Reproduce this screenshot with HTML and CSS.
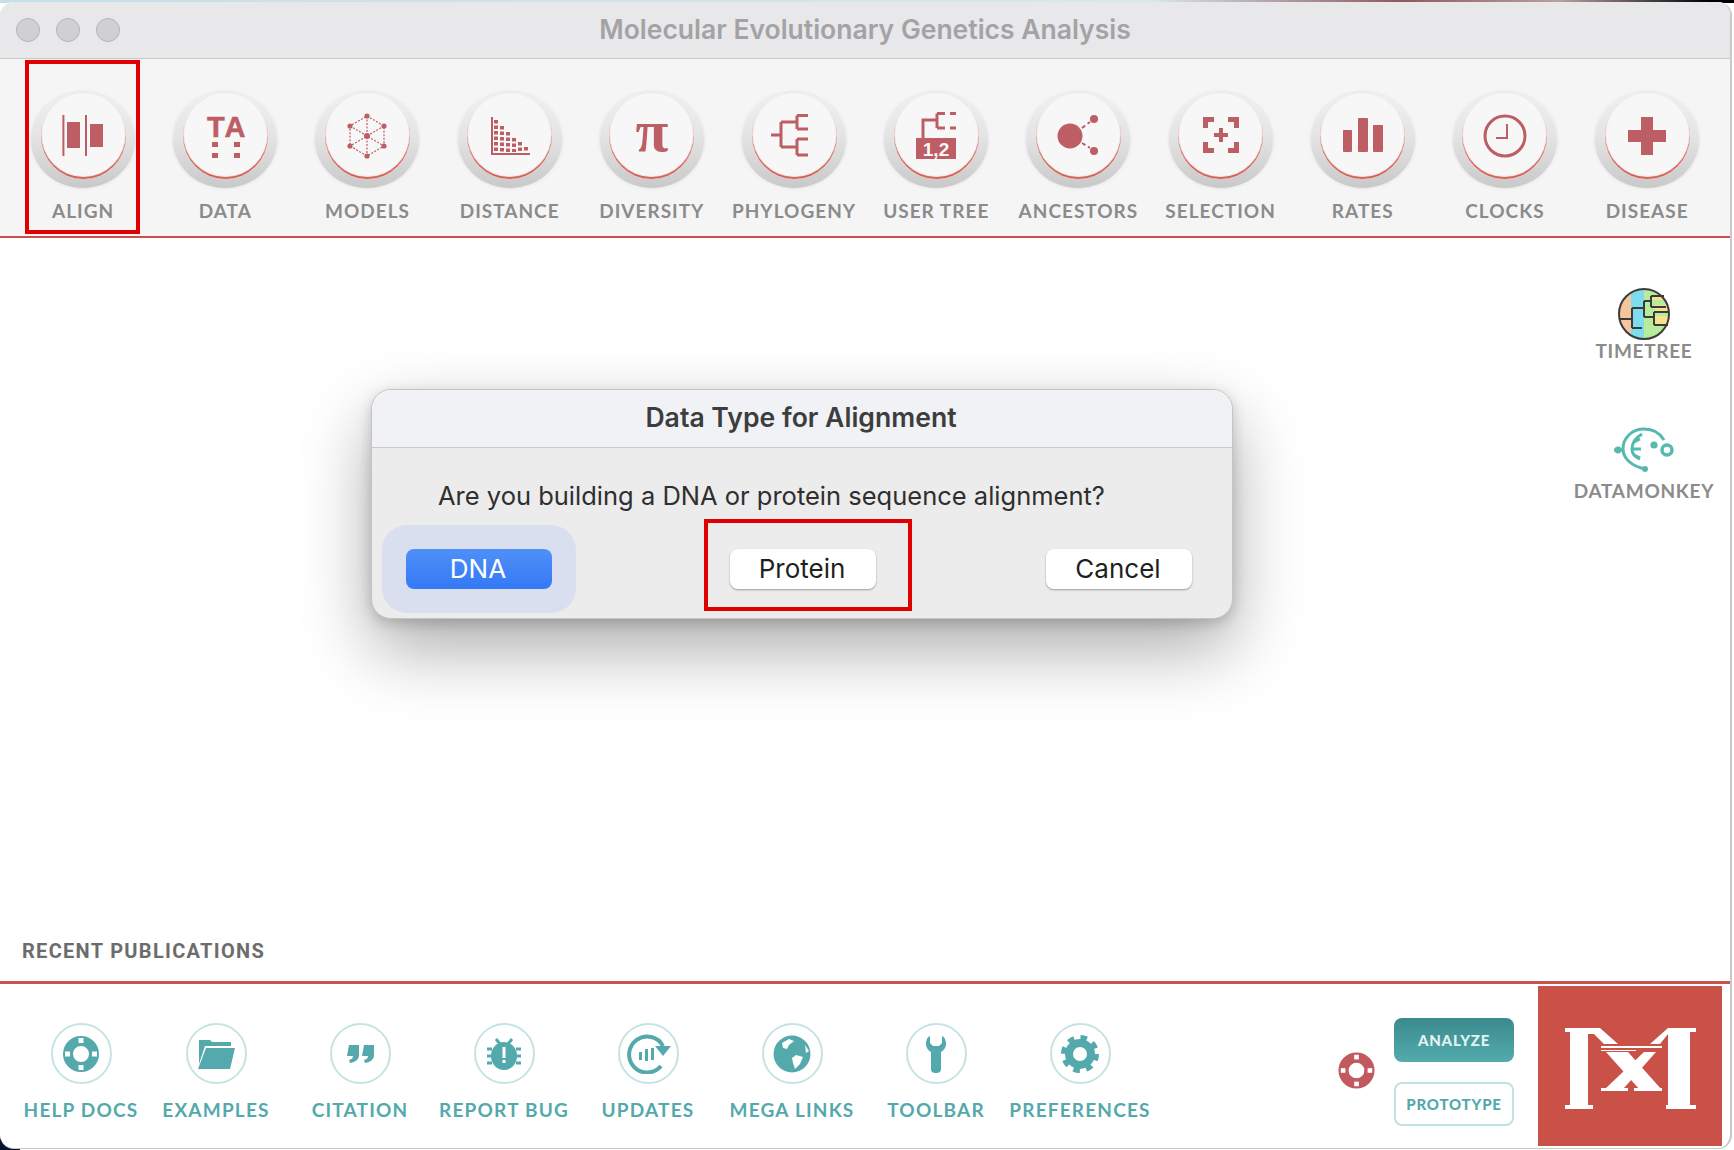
FILE: index.html
```html
<!DOCTYPE html>
<html lang="en">
<head>
  <meta charset="UTF-8">
  <title>Molecular Evolutionary Genetics Analysis</title>
  <link rel="stylesheet" href="styles.css">
</head>
<body>
  <div class="window">
    <div class="titlebar">
      <div class="lights"><span></span><span></span><span></span></div>
      <div class="title">Molecular Evolutionary Genetics Analysis</div>
    </div>

    <div class="toolbar">
      <div class="tool">
        <div class="disc"><div class="disc-in">
          <svg class="ico" width="48" height="48" viewBox="0 0 48 48"><rect x="3.4" y="3" width="2" height="41"/><rect x="8" y="10" width="13" height="26"/><rect x="26" y="3" width="2" height="41"/><rect x="31" y="12" width="13" height="23"/></svg>
        </div></div>
        <div class="tool-label">ALIGN</div>
      </div>
      <div class="tool">
        <div class="disc"><div class="disc-in">
          <svg class="ico" width="48" height="48" viewBox="0 0 48 48"><text x="6" y="25" class="ta">TA</text><rect x="11" y="30" width="6" height="5"/><rect x="11" y="41" width="6" height="5"/><rect x="33" y="30" width="6" height="5"/><rect x="33" y="41" width="6" height="5"/></svg>
        </div></div>
        <div class="tool-label">DATA</div>
      </div>
      <div class="tool">
        <div class="disc"><div class="disc-in">
          <svg class="ico" width="48" height="48" viewBox="0 0 48 48"><path class="dash" d="M24 4L41 14V34L24 44L7 34V14ZM24 4V44M7 14L41 34M41 14L7 34"/><circle cx="24" cy="4" r="2.6"/><circle cx="41" cy="14" r="2.6"/><circle cx="41" cy="34" r="2.6"/><circle cx="24" cy="44" r="2.6"/><circle cx="7" cy="34" r="2.6"/><circle cx="7" cy="14" r="2.6"/><circle cx="24" cy="24" r="3"/></svg>
        </div></div>
        <div class="tool-label">MODELS</div>
      </div>
      <div class="tool">
        <div class="disc"><div class="disc-in">
          <svg class="ico" width="48" height="48" viewBox="0 0 48 48"><path class="line2" d="M6 5V42H44"/><path class="dots" d="M10 8V40M16 14V40M22 20V40M28 26V40M34 30V40M40 35V40"/></svg>
        </div></div>
        <div class="tool-label">DISTANCE</div>
      </div>
      <div class="tool">
        <div class="disc"><div class="disc-in">
          <svg class="ico" width="72" height="72" viewBox="0 0 72 72"><text x="36" y="51" class="pi">π</text></svg>
        </div></div>
        <div class="tool-label">DIVERSITY</div>
      </div>
      <div class="tool">
        <div class="disc"><div class="disc-in">
          <svg class="ico" width="48" height="48" viewBox="0 0 48 48"><path class="line3" d="M1 23H11M11 10V35M11 10H27M11 35H27M27 3.5V17M27 3.5H38M27 17H38M27 27V43M27 27H38M27 43H38"/></svg>
        </div></div>
        <div class="tool-label">PHYLOGENY</div>
      </div>
      <div class="tool">
        <div class="disc"><div class="disc-in">
          <svg class="ico" width="48" height="48" viewBox="0 0 48 48"><rect x="4" y="26" width="40" height="21"/><path class="line3" d="M11 26V8H25M25 1.5V16M25 1.5H33M25 16H33M38 1.5H44M38 16H44"/><text x="24" y="43.500" class="num">1,2</text></svg>
        </div></div>
        <div class="tool-label">USER TREE</div>
      </div>
      <div class="tool">
        <div class="disc"><div class="disc-in">
          <svg class="ico" width="48" height="48" viewBox="0 0 48 48"><circle cx="16" cy="24" r="12.5"/><circle cx="40" cy="7" r="4"/><circle cx="40" cy="39" r="4"/><path class="dash2" d="M28 16L36 10M28 31L36 36"/></svg>
        </div></div>
        <div class="tool-label">ANCESTORS</div>
      </div>
      <div class="tool">
        <div class="disc"><div class="disc-in">
          <svg class="ico" width="48" height="48" viewBox="0 0 48 48"><path class="line5" d="M8.500 16V7.500H17M31 7.500H39.500V16M8.500 30V38.500H17M31 38.500H39.500V30"/><path class="line4" d="M24 16V30M17 23H31"/></svg>
        </div></div>
        <div class="tool-label">SELECTION</div>
      </div>
      <div class="tool">
        <div class="disc"><div class="disc-in">
          <svg class="ico" width="48" height="48" viewBox="0 0 48 48"><rect x="4" y="18" width="9" height="22" rx="1"/><rect x="19" y="6" width="10" height="34" rx="1"/><rect x="34" y="13" width="10" height="27" rx="1"/></svg>
        </div></div>
        <div class="tool-label">RATES</div>
      </div>
      <div class="tool">
        <div class="disc"><div class="disc-in">
          <svg class="ico" width="48" height="48" viewBox="0 0 48 48"><circle class="line3" cx="24" cy="24" r="20"/><path class="line2" d="M26 12V26H15"/></svg>
        </div></div>
        <div class="tool-label">CLOCKS</div>
      </div>
      <div class="tool">
        <div class="disc"><div class="disc-in">
          <svg class="ico" width="48" height="48" viewBox="0 0 48 48"><path d="M18 5H30V18H43V30H30V43H18V30H5V18H18Z"/></svg>
        </div></div>
        <div class="tool-label">DISEASE</div>
      </div>
      <div class="mark mark-align"></div>
    </div>

    <div class="main">
      <div class="side">
        <div class="side-link">
          <svg width="52" height="52" viewBox="0 0 52 52">
            <clipPath id="tt"><circle cx="26" cy="26" r="25"/></clipPath>
            <g clip-path="url(#tt)">
              <rect width="13" height="52" fill="#f5c69c"/>
              <rect x="13" width="13" height="52" fill="#7fdcec"/>
              <rect x="26" width="26" height="52" fill="#b6ec9c"/>
              <rect x="33" y="7" width="19" height="5" fill="#f6e28e"/>
              <rect x="37" y="17" width="15" height="6" fill="#f6e28e"/>
              <rect x="37" y="28" width="15" height="10" fill="#f6e28e"/>
            </g>
            <path class="tt-line" d="M1 31H14M14 20V40M14 20H26M14 40H24M26 13V29M26 13H33M33 8V19M33 8H46M33 19H48M26 29H36M36 24V37M36 24H50M36 37H50"/>
            <circle class="tt-line" cx="26" cy="26" r="25"/>
          </svg>
          <div class="side-label">TIMETREE</div>
        </div>
        <div class="side-link monkey">
          <svg width="62" height="46" viewBox="0 0 62 46">
            <path class="mk" d="M32 43C18 40 10 32 10 23C10 11 20 3 31 3C40 3 47 7 51 14"/>
            <path class="mk" d="M29 8C22 12 19 18 19 23C19 28 22 31 27 33"/>
            <path class="mk" d="M1 24H10M19 23H28M21 16L27 13M21 29L27 32"/>
            <circle class="mk-dot" cx="5" cy="24" r="3.4"/>
            <circle class="mk-dot" cx="32" cy="43" r="3"/>
            <circle class="mk-dot" cx="41" cy="19" r="3.6"/>
            <circle class="mk-ring" cx="54" cy="24" r="5"/>
          </svg>
          <div class="side-label">DATAMONKEY</div>
        </div>
      </div>
      <div class="recent">RECENT PUBLICATIONS</div>
    </div>

    <div class="footer">
      <div class="foot-item">
        <div class="foot-disc"><svg class="tl" width="40" height="40" viewBox="0 0 40 40"><circle class="ring" cx="20" cy="20" r="13"/><rect class="wh" x="17.5" y="4" width="5" height="5"/><rect class="wh" x="17.5" y="31" width="5" height="5"/><rect class="wh" x="4" y="17.5" width="5" height="5"/><rect class="wh" x="31" y="17.5" width="5" height="5"/></svg></div>
        <div class="foot-label">HELP DOCS</div>
      </div>
      <div class="foot-item">
        <div class="foot-disc"><svg class="tl" width="40" height="40" viewBox="0 0 40 40"><path d="M3 6H14L16 8H35V12H9L3 30Z"/><path d="M10 14H39L34 35H2Z"/></svg></div>
        <div class="foot-label">EXAMPLES</div>
      </div>
      <div class="foot-item">
        <div class="foot-disc"><svg class="tl" width="40" height="40" viewBox="0 0 40 40"><path d="M9 11H19V21C19 25 16 28 10 29L9 26C12 25 13 24 13 22H7Z"/><path d="M24 11H34V21C34 25 31 28 25 29L24 26C27 25 28 24 28 22H22Z"/></svg></div>
        <div class="foot-label">CITATION</div>
      </div>
      <div class="foot-item">
        <div class="foot-disc"><svg class="tl" width="40" height="40" viewBox="0 0 40 40"><ellipse cx="20" cy="22" rx="13" ry="14"/><path class="stroke3" d="M12 5L16 10M28 5L24 10M3 15H8M3 22H8M3 29H8M37 15H32M37 22H32M37 29H32"/><rect class="wh" x="18.5" y="13" width="3" height="11"/><rect class="wh" x="18.5" y="26" width="3" height="3"/></svg></div>
        <div class="foot-label">REPORT BUG</div>
      </div>
      <div class="foot-item">
        <div class="foot-disc"><svg class="tl" width="48" height="40" viewBox="0 0 48 40"><path class="stroke4" d="M37 32A18 18 0 1 1 39 12"/><path d="M31 12H47L39 22Z"/><rect x="15" y="18" width="3" height="8"/><rect x="21" y="15" width="3" height="12"/><rect x="27" y="14" width="3" height="12"/></svg></div>
        <div class="foot-label">UPDATES</div>
      </div>
      <div class="foot-item">
        <div class="foot-disc"><svg class="tl" width="40" height="40" viewBox="0 0 40 40"><circle cx="20" cy="20" r="18.500"/><path class="wh" d="M10 9L17 5L22 7L17 11L15 15L11 14ZM24 21L31 23L28 30L23 35L21 29L20 24ZM33 11L37 17L34 19Z"/></svg></div>
        <div class="foot-label">MEGA LINKS</div>
      </div>
      <div class="foot-item">
        <div class="foot-disc"><svg class="tl" width="40" height="40" viewBox="0 0 40 40"><path d="M14 2V9L17 12H23L26 9V2C29 3 30 7 30 10C30 14 27 17 25 18V35C25 38 23 39 20 39C17 39 15 38 15 35V18C13 17 10 14 10 10C10 7 11 3 14 2Z"/></svg></div>
        <div class="foot-label">TOOLBAR</div>
      </div>
      <div class="foot-item">
        <div class="foot-disc"><svg class="tl" width="40" height="40" viewBox="0 0 40 40"><circle class="teeth" cx="20" cy="20" r="16.500"/><circle class="gear" cx="20" cy="20" r="11"/></svg></div>
        <div class="foot-label">PREFERENCES</div>
      </div>

      <div class="foot-right">
        <svg class="lifering" width="37" height="37" viewBox="0 0 40 40"><circle class="ring" cx="20" cy="20" r="14"/><rect class="wh" x="17.500" y="3" width="5" height="5"/><rect class="wh" x="17.500" y="32" width="5" height="5"/><rect class="wh" x="3" y="17.500" width="5" height="5"/><rect class="wh" x="32" y="17.500" width="5" height="5"/></svg>
        <div class="modes">
          <div class="mode mode-on">ANALYZE</div>
          <div class="mode">PROTOTYPE</div>
        </div>
        <div class="logo">
          <svg width="184" height="160" viewBox="0 0 184 160">
            <path d="M27 42H62L80 58H66L56 48H50V119H55V123H27V119H32V46H27Z"/>
            <path d="M158 42H130L112 58H122L130 48V119H128V123H158V119H152V46H158Z"/>
            <path d="M63 60H124V62H63ZM63 64H98V65H63Z"/>
            <path d="M68 66H90L124 104H102Z"/>
            <path d="M118 66H106L68 102H86Z"/>
            <path d="M63 102H90V105H63ZM96 102H124V105H96Z"/>
          </svg>
        </div>
      </div>
    </div>

    <div class="dialog">
      <div class="dialog-title">Data Type for Alignment</div>
      <div class="dialog-body">
        <div class="dialog-msg">Are you building a DNA or protein sequence alignment?</div>
        <div class="dialog-btns">
          <button class="btn btn-primary">DNA</button>
          <button class="btn btn-protein">Protein</button>
          <button class="btn btn-cancel">Cancel</button>
        </div>
      </div>
    </div>
    <div class="mark mark-protein"></div>
  </div>
</body>
</html>
```

FILE: styles.css
```css
* {
  box-sizing: border-box;
}

html, body {
  margin: 0;
  padding: 0;
}

body {
  width: 1734px;
  height: 1150px;
  overflow: hidden;
  padding-top: 2px;
  background:
    linear-gradient(90deg, #c4dfe6 0, #d8e8ea 1150px, #8c5a60 1400px, #b9a0a0 1560px, #000 1710px) top / 100% 3px no-repeat,
    linear-gradient(#06152f, #06152f) left bottom / 20px 22px no-repeat,
    #fff;
  font-family: "Lato", sans-serif;
}

.window {
  position: relative;
  width: 1732px;
  height: 1146px;
  background: #fff;
  border-right: 2px solid #c9c9c9;
  border-radius: 14px 14px 14px 14px;
  display: flex;
  flex-direction: column;
  overflow: hidden;
  box-shadow: 0 1px 0 #c9c9c9;
}

.titlebar {
  position: relative;
  height: 57px;
  flex: none;
  padding-bottom: 2px;
  background: #e8e7e9;
  border-bottom: 1px solid #c9c9cb;
  display: flex;
  align-items: center;
  justify-content: center;
}

.lights {
  position: absolute;
  left: 16px;
  top: 16px;
  display: flex;
  gap: 16px;
}

.lights span {
  width: 24px;
  height: 24px;
  border-radius: 50%;
  background: #d0cfd1;
  border: 1px solid #b4b4b6;
}

.title {
  font-family: "Inter", sans-serif;
  font-weight: 600;
  font-size: 26.500px;
  color: #a3a3a5;
}

.toolbar {
  position: relative;
  height: 179px;
  flex: none;
  padding-left: 12px;
  background: #f5f5f5;
  border-bottom: 2px solid #c9524a;
  display: grid;
  grid-template-columns: repeat(12, 142.2px);
}

.tool {
  display: flex;
  flex-direction: column;
  align-items: center;
  padding-top: 33px;
}

.disc {
  width: 104px;
  height: 96px;
  border-radius: 50%;
  background: linear-gradient(#f1f1f1, #e4e4e4 45%, #c9c9c9);
  box-shadow: 0 0 3px rgba(200, 200, 200, 0.6);
  display: flex;
  justify-content: center;
}

.disc-in {
  width: 85px;
  height: 87px;
  border-radius: 50%;
  background: #f7f7f7;
  box-shadow: inset 0 -2px 1px #d55a4e, inset 0 0 2px #eccfc8;
  display: flex;
  align-items: center;
  justify-content: center;
}

.ico {
  fill: #bd5e64;
}

.ico .ta {
  font-family: "Liberation Sans", sans-serif;
  font-weight: 700;
  font-size: 29px;
  letter-spacing: 2px;
  stroke: #bd5e64;
  stroke-width: 0.5;
}

.ico .pi {
  font-family: "Liberation Serif", serif;
  font-weight: 700;
  font-size: 60px;
  text-anchor: middle;
}

.ico .num {
  font-family: "Liberation Sans", sans-serif;
  font-weight: 700;
  font-size: 19px;
  text-anchor: middle;
  fill: #f7f7f7;
}

.ico .dash {
  fill: none;
  stroke: #bd5e64;
  stroke-width: 1.2;
  stroke-dasharray: 2 1.5;
}

.ico .dash2 {
  fill: none;
  stroke: #bd5e64;
  stroke-width: 2;
  stroke-dasharray: 4 3;
}

.ico .line2 {
  fill: none;
  stroke: #bd5e64;
  stroke-width: 2;
}

.ico .line3 {
  fill: none;
  stroke: #bd5e64;
  stroke-width: 3;
}

.ico .line4 {
  fill: none;
  stroke: #bd5e64;
  stroke-width: 4;
}

.ico .line5 {
  fill: none;
  stroke: #bd5e64;
  stroke-width: 5;
}

.ico .dots {
  fill: none;
  stroke: #bd5e64;
  stroke-width: 4;
  stroke-dasharray: 3.500 2;
}

.tool-label {
  margin-top: 11px;
  font-weight: 700;
  font-size: 19px;
  line-height: 24px;
  letter-spacing: 1px;
  white-space: nowrap;
  color: #8b8b8b;
}

.mark {
  position: absolute;
  border: 4px solid #e00000;
}

.mark-align {
  left: 25px;
  top: 1px;
  width: 115px;
  height: 174px;
}

.mark-protein {
  left: 704px;
  top: 517px;
  width: 208px;
  height: 92px;
}

.main {
  flex: 1;
  display: flex;
  flex-direction: column;
  justify-content: space-between;
}

.side {
  align-self: flex-end;
  width: 172px;
  padding-top: 50px;
  display: flex;
  flex-direction: column;
  align-items: center;
}

.side-link {
  display: flex;
  flex-direction: column;
  align-items: center;
}

.side-link.monkey {
  margin-top: 64px;
}

.side-link.monkey .side-label {
  margin-top: 8px;
}

.side-label {
  font-weight: 700;
  font-size: 19px;
  line-height: 22px;
  letter-spacing: 0.7px;
  white-space: nowrap;
  color: #8b8b8b;
}

.tt-line {
  fill: none;
  stroke: #3b3b3b;
  stroke-width: 2;
}

.mk {
  fill: none;
  stroke: #55b9ad;
  stroke-width: 3;
}

.mk-dot {
  fill: #55b9ad;
}

.mk-ring {
  fill: none;
  stroke: #55b9ad;
  stroke-width: 3.500;
}

.recent {
  padding: 0 0 18px 22px;
  font-family: "Roboto", sans-serif;
  font-weight: 700;
  font-size: 20px;
  line-height: 24px;
  letter-spacing: 1.3px;
  color: #6c6c6c;
}

.footer {
  height: 167px;
  flex: none;
  padding-left: 18px;
  border-top: 3px solid #c9534a;
  display: flex;
}

.foot-item {
  width: 144px;
  padding-top: 39px;
  display: flex;
  flex-direction: column;
  align-items: center;
}

.foot-item:first-child {
  width: 126px;
}

.foot-disc {
  width: 61px;
  height: 61px;
  border: 2px solid #c6e4e3;
  border-radius: 50%;
  display: flex;
  align-items: center;
  justify-content: center;
}

.foot-label {
  margin-top: 15px;
  font-weight: 700;
  font-size: 19px;
  line-height: 22px;
  letter-spacing: 1.2px;
  white-space: nowrap;
  color: #53a9ab;
}

.tl {
  fill: #53a9ab;
}

.tl .ring {
  fill: none;
  stroke: #53a9ab;
  stroke-width: 10;
}

.tl .wh, .lifering .wh {
  fill: #fff;
}

.tl .stroke3 {
  fill: none;
  stroke: #53a9ab;
  stroke-width: 3;
}

.tl .stroke4 {
  fill: none;
  stroke: #53a9ab;
  stroke-width: 4;
}

.tl .teeth {
  fill: none;
  stroke: #53a9ab;
  stroke-width: 5;
  stroke-dasharray: 6.500 6.460;
}

.tl .gear {
  fill: none;
  stroke: #53a9ab;
  stroke-width: 8;
}

.foot-right {
  margin-left: auto;
  margin-right: 8px;
  padding-top: 2px;
  display: flex;
  align-items: flex-start;
}

.lifering {
  margin-top: 66px;
}

.lifering .ring {
  fill: none;
  stroke: #c05a5f;
  stroke-width: 11;
}

.modes {
  margin: 32px 24px 0 19px;
  width: 120px;
  display: flex;
  flex-direction: column;
  gap: 20px;
}

.mode {
  height: 44px;
  border: 2px solid #bfe2e2;
  border-radius: 8px;
  display: flex;
  align-items: center;
  justify-content: center;
  font-weight: 900;
  font-size: 15px;
  letter-spacing: 0.8px;
  color: #53a9ab;
}

.mode-on {
  border: none;
  background: linear-gradient(#3a8a8d, #53abad);
  color: #e4f2f2;
}

.logo {
  width: 184px;
  height: 160px;
  background: #c95147;
  fill: #fff;
}

.dialog {
  position: absolute;
  left: 371px;
  top: 387px;
  width: 862px;
  height: 230px;
  border: 1px solid #c4c4c4;
  border-radius: 20px;
  overflow: hidden;
  background: #ececec;
  box-shadow: 0 30px 70px rgba(0, 0, 0, 0.33), 0 4px 14px rgba(0, 0, 0, 0.18);
  font-family: "Inter", sans-serif;
}

.dialog-title {
  height: 58px;
  padding: 0 2px 4px 0;
  background: #f1f2f5;
  border-bottom: 1px solid #c9c9c9;
  display: flex;
  align-items: center;
  justify-content: center;
  font-weight: 600;
  font-size: 26.600px;
  color: #3d3d3d;
}

.dialog-body {
  padding: 32px 0 0 34px;
}

.dialog-msg {
  margin-left: 32px;
  font-size: 25.500px;
  line-height: 32px;
  color: #2f2f2f;
}

.dialog-btns {
  margin-top: 37px;
  display: flex;
}

.btn {
  width: 146px;
  height: 40px;
  padding: 0 2px 2px 0;
  border: none;
  border-radius: 8px;
  background: #fff;
  box-shadow: 0 1px 2px rgba(0, 0, 0, 0.35);
  font-family: "Inter", sans-serif;
  font-size: 26px;
  color: #1f1f1f;
}

.btn-primary {
  background: linear-gradient(#4f90f7, #3478f6);
  box-shadow: 0 0 0 24px #d9dfef;
  color: #fff;
}

.btn-protein {
  margin-left: 178px;
}

.btn-cancel {
  margin-left: 170px;
}
```
